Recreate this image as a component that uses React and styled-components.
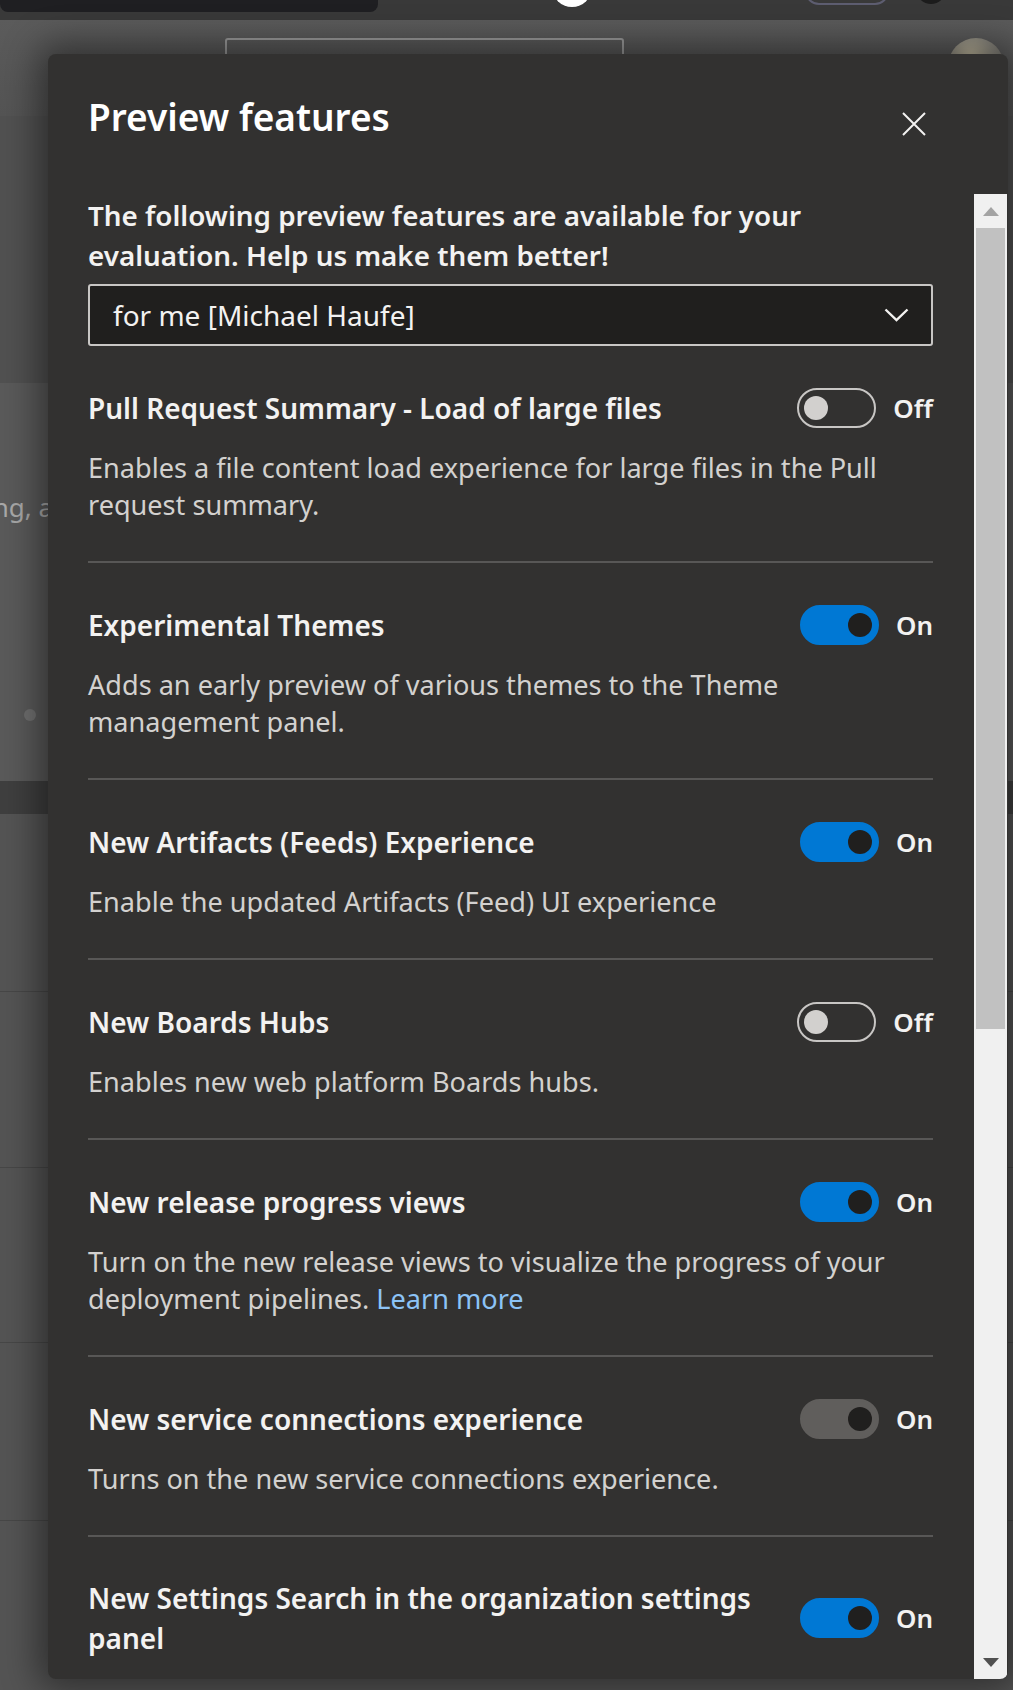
import React from 'react';
import styled, { createGlobalStyle } from 'styled-components';

const GlobalStyle = createGlobalStyle`
  html, body {
    margin: 0;
    padding: 0;
    background: #555555;
    overflow: hidden;
  }
  body {
    font-family: "Noto Sans", "Open Sans", sans-serif;
  }
  * {
    box-sizing: border-box;
  }
`;

/* ---------- dimmed page behind the panel ---------- */

const Screen = styled.div`
  position: relative;
  width: 1013px;
  height: 1690px;
  overflow: hidden;
  background: #555555;
`;

const Backdrop = styled.div`
  display: flex;
  flex-direction: column;
  height: 100%;
`;

const TopBar = styled.div`
  display: flex;
  align-items: flex-end;
  height: 20px;
  overflow: hidden;
  background: #393939;
`;

const SearchBox = styled.div`
  flex: none;
  width: 378px;
  height: 40px;
  margin-bottom: 8px;
  border-radius: 8px;
  background: #1f1f22;
`;

const WhiteDot = styled.div`
  flex: none;
  width: 40px;
  height: 40px;
  margin: 0 0 13px 174px;
  border-radius: 50%;
  background: #ffffff;
`;

const OutlinePill = styled.div`
  flex: none;
  width: 84px;
  height: 36px;
  margin: 0 0 15px 213px;
  border-radius: 14px;
  border: 2px solid #5d5d70;
`;

const DarkDot = styled.div`
  flex: none;
  width: 30px;
  height: 30px;
  margin: 0 0 16px 27px;
  border-radius: 50%;
  background: #1c1c1c;
`;

const PageHeader = styled.div`
  display: flex;
  align-items: flex-start;
  height: 96px;
  padding-top: 18px;
  background: linear-gradient(180deg, #5b5b5b 0%, #545454 100%);
`;

const HeaderField = styled.div`
  width: 399px;
  height: 60px;
  margin-left: 225px;
  border: 2px solid #9a9a9a;
  border-radius: 3px;
`;

const Avatar = styled.div`
  width: 56px;
  height: 56px;
  margin-left: 324px;
  border-radius: 50%;
  background: radial-gradient(circle at 40% 35%, #c9c0a4 0%, #8d8a80 45%, #4e4e50 100%);
`;

const PageSection = styled.div`
  height: ${p => p.$h}px;
  background: ${p => p.$bg};
  border-top: 1px solid ${p => p.$line || 'transparent'};
`;

const Card = styled.div`
  display: flex;
  flex-direction: column;
  height: 398px;
  background: #5a5a5a;
`;

const CardText = styled.div`
  margin: 106px 0 0 -14px;
  font-size: 26px;
  color: #a9a9a9;
  white-space: nowrap;
`;

const CardDot = styled.div`
  width: 12px;
  height: 12px;
  margin: 184px 0 0 24px;
  border-radius: 50%;
  background: #707070;
`;

/* ---------- panel ---------- */

const Panel = styled.section`
  position: absolute;
  left: 48px;
  top: 54px;
  width: 960px;
  height: 1625px;
  display: flex;
  flex-direction: column;
  background: #323130;
  border-radius: 8px;
  overflow: hidden;
  box-shadow: 0 0 36px 10px rgba(0, 0, 0, 0.45);
  color: #f3f2f1;
`;

const PanelHeader = styled.header`
  flex: none;
  display: flex;
  justify-content: space-between;
  align-items: flex-start;
  height: 140px;
  padding: 39px 72px 0 40px;
`;

const PanelTitle = styled.h1`
  margin: 0;
  font-size: 37px;
  line-height: 48px;
  font-weight: 600;
  color: #ffffff;
`;

const CloseButton = styled.button`
  display: flex;
  align-items: center;
  justify-content: center;
  width: 44px;
  height: 44px;
  margin-top: 9px;
  padding: 0;
  border: none;
  background: transparent;
  color: #f3f2f1;
`;

const PanelBody = styled.div`
  flex: 1;
  display: flex;
  min-height: 0;
`;

const ScrollArea = styled.div`
  flex: 1;
  overflow: hidden;
  padding: 1px 41px 0 40px;
`;

const Intro = styled.p`
  margin: 0;
  font-size: 27.8px;
  line-height: 40px;
  font-weight: 600;
  color: #f3f2f1;
`;

const Select = styled.div`
  display: flex;
  align-items: center;
  justify-content: space-between;
  height: 62px;
  margin-top: 9px;
  padding: 0 22px 0 23px;
  background: #201f1e;
  border: 2px solid #c8c6c4;
  border-radius: 3px;
  font-size: 28px;
  color: #f3f2f1;
`;

const Feature = styled.div`
  padding: 41px 0 38px;
  border-bottom: 2px solid #585756;
`;

const FeatureHead = styled.div`
  display: flex;
  align-items: center;
  justify-content: space-between;
  gap: 24px;
  min-height: 41px;
`;

const FeatureTitle = styled.div`
  flex: 1;
  font-size: 28px;
  line-height: 40px;
  font-weight: 600;
  color: #f3f2f1;
`;

const ToggleGroup = styled.div`
  flex: none;
  display: flex;
  align-items: center;
  gap: 17px;
`;

const trackColors = {
  on: '#0078d4',
  off: 'transparent',
  disabled: '#605e5c',
};

const Switch = styled.div`
  display: flex;
  align-items: center;
  justify-content: ${p => (p.$state === 'off' ? 'flex-start' : 'flex-end')};
  width: 79px;
  height: 40px;
  padding: 0 5px;
  border-radius: 20px;
  border: 2px solid ${p => (p.$state === 'off' ? '#c8c6c4' : trackColors[p.$state])};
  background: ${p => trackColors[p.$state]};
`;

const Knob = styled.div`
  width: 24px;
  height: 24px;
  border-radius: 50%;
  background: ${p => (p.$state === 'off' ? '#d2d0ce' : '#201f1e')};
`;

const SwitchLabel = styled.span`
  font-size: 26px;
  font-weight: 600;
  color: #f3f2f1;
`;

const FeatureDesc = styled.p`
  margin: 21px 0 0;
  font-size: 27.1px;
  line-height: 37px;
  color: #d3d1cf;
`;

const Link = styled.a`
  color: #8cc3f6;
  text-decoration: none;
`;

const Scrollbar = styled.div`
  flex: none;
  display: flex;
  flex-direction: column;
  width: 33px;
  margin-right: 1px;
  background: #f0f0f0;
`;

const ScrollButton = styled.div`
  flex: none;
  display: flex;
  align-items: center;
  justify-content: center;
  height: 34px;
`;

const ScrollTrack = styled.div`
  flex: 1;
  padding: 0 2px;
`;

const Thumb = styled.div`
  height: 801px;
  background: #c1c1c1;
`;

const Arrow = ({ dir, color }) => (
  <svg width="16" height="9" viewBox="0 0 16 9">
    <polygon points={dir === 'up' ? '8,0 16,9 0,9' : '0,0 16,0 8,9'} fill={color} />
  </svg>
);

const Toggle = ({ state }) => (
  <ToggleGroup>
    <Switch $state={state}>
      <Knob $state={state} />
    </Switch>
    <SwitchLabel>{state === 'off' ? 'Off' : 'On'}</SwitchLabel>
  </ToggleGroup>
);

const features = [
  {
    title: 'Pull Request Summary - Load of large files',
    state: 'off',
    desc: 'Enables a file content load experience for large files in the Pull request summary.',
  },
  {
    title: 'Experimental Themes',
    state: 'on',
    desc: 'Adds an early preview of various themes to the Theme management panel.',
  },
  {
    title: 'New Artifacts (Feeds) Experience',
    state: 'on',
    desc: 'Enable the updated Artifacts (Feed) UI experience',
  },
  {
    title: 'New Boards Hubs',
    state: 'off',
    desc: 'Enables new web platform Boards hubs.',
  },
  {
    title: 'New release progress views',
    state: 'on',
    desc: 'Turn on the new release views to visualize the progress of your deployment pipelines.',
    link: 'Learn more',
  },
  {
    title: 'New service connections experience',
    state: 'disabled',
    desc: 'Turns on the new service connections experience.',
  },
  {
    title: 'New Settings Search in the organization settings panel',
    state: 'on',
  },
];

const App = () => {
  return (
    <>
      <GlobalStyle />
      <Screen>
        <Backdrop>
          <TopBar>
            <SearchBox />
            <WhiteDot />
            <OutlinePill />
            <DarkDot />
          </TopBar>
          <PageHeader>
            <HeaderField />
            <Avatar />
          </PageHeader>
          <PageSection $h={267} $bg="#515151" />
          <Card>
            <CardText>ing, and</CardText>
            <CardDot />
          </Card>
          <PageSection $h={33} $bg="#3f3f3f" />
          <PageSection $h={177} $bg="#545454" />
          <PageSection $h={176} $bg="#545454" $line="#474747" />
          <PageSection $h={175} $bg="#545454" $line="#474747" />
          <PageSection $h={178} $bg="#545454" $line="#474747" />
          <PageSection $h={170} $bg="#545454" $line="#474747" />
        </Backdrop>

        <Panel>
          <PanelHeader>
            <PanelTitle>Preview features</PanelTitle>
            <CloseButton aria-label="Close">
              <svg width="24" height="24" viewBox="0 0 24 24">
                <path d="M1 1L23 23M23 1L1 23" stroke="currentColor" strokeWidth="2" fill="none" />
              </svg>
            </CloseButton>
          </PanelHeader>

          <PanelBody>
            <ScrollArea>
              <Intro>The following preview features are available for your evaluation. Help us make them better!</Intro>
              <Select>
                <span>for me [Michael Haufe]</span>
                <svg width="25" height="14" viewBox="0 0 25 14">
                  <polyline points="1.5,1.5 12.5,12 23.5,1.5" stroke="#f3f2f1" strokeWidth="2.4" fill="none" />
                </svg>
              </Select>

              {features.map(f => (
                <Feature key={f.title}>
                  <FeatureHead>
                    <FeatureTitle>{f.title}</FeatureTitle>
                    <Toggle state={f.state} />
                  </FeatureHead>
                  {f.desc && (
                    <FeatureDesc>
                      {f.desc}
                      {f.link && <> <Link href="#">{f.link}</Link></>}
                    </FeatureDesc>
                  )}
                </Feature>
              ))}
            </ScrollArea>

            <Scrollbar>
              <ScrollButton>
                <Arrow dir="up" color="#a3a3a3" />
              </ScrollButton>
              <ScrollTrack>
                <Thumb />
              </ScrollTrack>
              <ScrollButton>
                <Arrow dir="down" color="#505050" />
              </ScrollButton>
            </Scrollbar>
          </PanelBody>
        </Panel>
      </Screen>
    </>
  );
};

export default App;
